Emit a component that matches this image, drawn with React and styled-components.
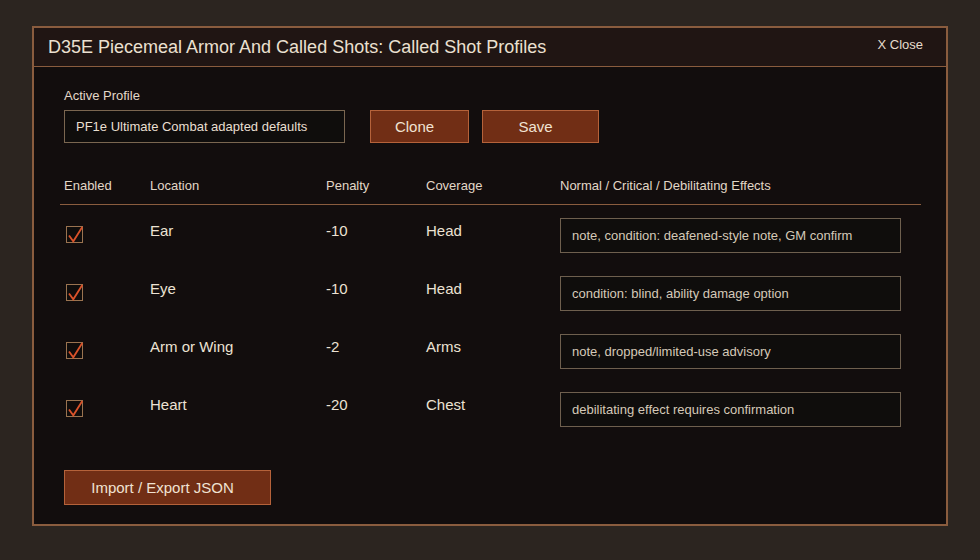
import React from 'react';
import styled, { createGlobalStyle } from 'styled-components';

const GlobalStyle = createGlobalStyle`
  html, body {
    margin: 0;
    padding: 0;
    background: #2c2520;
    font-family: "Liberation Sans", Arial, sans-serif;
  }
`;

const Page = styled.div`
  width: 980px;
  height: 560px;
  padding: 26px 32px 0;
  box-sizing: border-box;
`;

const Panel = styled.section`
  width: 916px;
  height: 500px;
  box-sizing: border-box;
  border: 2px solid #8a5c3e;
  background: #120d0d;
  display: flex;
  flex-direction: column;
`;

const Header = styled.header`
  height: 38px;
  display: flex;
  align-items: center;
  justify-content: space-between;
  padding: 0 23px 0 14px;
  background: #201513;
  border-bottom: 1px solid #8a5c3e;
`;

const Title = styled.h1`
  margin: 0;
  font-size: 18px;
  font-weight: normal;
  color: #ebe0d0;
`;

const CloseButton = styled.button`
  background: none;
  border: none;
  padding: 0;
  margin-top: -6px;
  font: inherit;
  font-size: 13px;
  color: #e6dccd;
  cursor: pointer;
`;

const Body = styled.div`
  flex: 1;
  padding: 21px 25px 0 26px;
  display: flex;
  flex-direction: column;
`;

const ProfileBlock = styled.div`
  padding-left: 4px;
`;

const Label = styled.div`
  font-size: 13px;
  color: #e3d8c8;
  margin-bottom: 7px;
`;

const ProfileRow = styled.div`
  display: flex;
  align-items: center;
`;

const TextField = styled.div`
  box-sizing: border-box;
  width: ${p => p.$width}px;
  height: ${p => p.$height}px;
  display: flex;
  align-items: center;
  padding-left: 11px;
  padding-bottom: ${p => p.$lift || 0}px;
  background: #0f0d0c;
  border: 1px solid ${p => p.$border || '#7a6650'};
  font-size: 13px;
  color: ${p => p.$color || '#e9dfd0'};
  white-space: nowrap;
`;

const Button = styled.button`
  box-sizing: border-box;
  width: ${p => p.$width}px;
  height: ${p => p.$height || 33}px;
  margin-left: ${p => p.$gap || 0}px;
  background: #712e15;
  border: 1px solid #b5623a;
  color: #f0e2d2;
  font-family: inherit;
  font-size: 15px;
  padding: 0 10px 0 0;
  cursor: pointer;
`;

const Table = styled.div`
  margin-top: 35px;
`;

const Grid = styled.div`
  display: grid;
  grid-template-columns: 86px 176px 100px 134px 1fr;
  padding-left: 4px;
`;

const HeadRow = styled(Grid)`
  font-size: 13px;
  color: #e2d7c7;
  padding-bottom: 11px;
  border-bottom: 1px solid #8a5c3e;
`;

const Rows = styled.div`
  padding-top: 13px;
`;

const Row = styled(Grid)`
  height: 58px;
  align-items: start;
`;

const Cell = styled.div`
  font-size: 15px;
  color: #ece2d3;
  padding-top: 4px;
`;

const CheckBox = styled.span`
  position: relative;
  display: block;
  width: 17px;
  height: 17px;
  box-sizing: border-box;
  margin: 8px 0 0 2px;
  border: 1px solid #9a7350;
  background: #0f0c0b;

  svg {
    position: absolute;
    left: 1px;
    top: -3px;
    overflow: visible;
  }
`;

const Footer = styled.div`
  margin-top: 20px;
  padding-left: 4px;
`;

const rows = [
  { loc: 'Ear', pen: '-10', cov: 'Head', fx: 'note, condition: deafened-style note, GM confirm' },
  { loc: 'Eye', pen: '-10', cov: 'Head', fx: 'condition: blind, ability damage option' },
  { loc: 'Arm or Wing', pen: '-2', cov: 'Arms', fx: 'note, dropped/limited-use advisory' },
  { loc: 'Heart', pen: '-20', cov: 'Chest', fx: 'debilitating effect requires confirmation' },
];

const Check = () => (
  <CheckBox>
    <svg width="16" height="18" viewBox="0 0 16 18">
      <path d="M1 11.5 L5.3 17.3 L14.3 3" fill="none" stroke="#d9522a" strokeWidth="1.8" strokeLinejoin="miter" />
    </svg>
  </CheckBox>
);

export default function App() {
  return (
    <>
      <GlobalStyle />
      <Page>
        <Panel>
          <Header>
            <Title>D35E Piecemeal Armor And Called Shots: Called Shot Profiles</Title>
            <CloseButton>X Close</CloseButton>
          </Header>
          <Body>
            <ProfileBlock>
              <Label>Active Profile</Label>
              <ProfileRow>
                <TextField $width={281} $height={33}>PF1e Ultimate Combat adapted defaults</TextField>
                <Button $width={99} $gap={25}>Clone</Button>
                <Button $width={117} $gap={13}>Save</Button>
              </ProfileRow>
            </ProfileBlock>
            <Table>
              <HeadRow>
                <div>Enabled</div>
                <div>Location</div>
                <div>Penalty</div>
                <div>Coverage</div>
                <div>Normal / Critical / Debilitating Effects</div>
              </HeadRow>
              <Rows>
                {rows.map(r => (
                  <Row key={r.loc}>
                    <div><Check /></div>
                    <Cell>{r.loc}</Cell>
                    <Cell>{r.pen}</Cell>
                    <Cell>{r.cov}</Cell>
                    <TextField $width={341} $height={35} $lift={1} $border="#6e5f4e" $color="#d5c9b8">{r.fx}</TextField>
                  </Row>
                ))}
              </Rows>
            </Table>
            <Footer>
              <Button $width={207} $height={35}>Import / Export JSON</Button>
            </Footer>
          </Body>
        </Panel>
      </Page>
    </>
  );
}
